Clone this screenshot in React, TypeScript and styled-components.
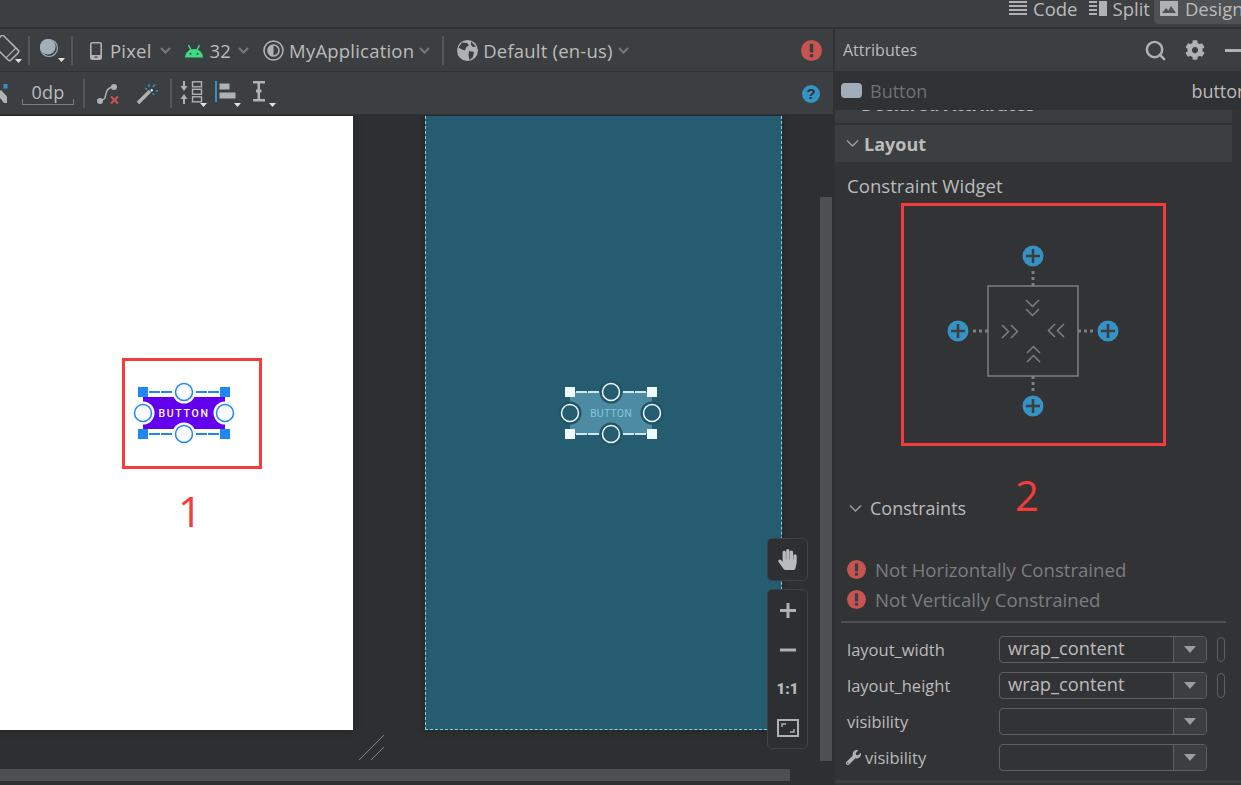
import React from "react";
import styled, { createGlobalStyle } from "styled-components";
import { Search } from "lucide-react";
import { FaCog, FaHandPaper, FaWrench } from "react-icons/fa";

const GlobalStyle = createGlobalStyle`
  html, body {
    margin: 0;
    padding: 0;
    background: #2e2f31;
    overflow: hidden;
  }
  * {
    box-sizing: border-box;
  }
`;

const Root = styled.div`
  width: 1241px;
  height: 785px;
  display: flex;
  flex-direction: column;
  overflow: hidden;
  font-family: "Open Sans", "Noto Sans", sans-serif;
  color: #bbbbbb;
  background: #2e2f31;
`;

const TopBar = styled.div`
  height: 29px;
  flex: none;
  display: flex;
  align-items: flex-start;
  padding-left: 1009px;
  background: #3c3f41;
  border-bottom: 2px solid #2f3133;
  overflow: hidden;
`;

const ViewTab = styled.div<{ $active?: boolean }>`
  height: 24px;
  flex: none;
  display: flex;
  align-items: center;
  gap: ${(p) => (p.$active ? "7px" : "6px")};
  padding: 0 ${(p) => (p.$active ? "6px" : "0")};
  margin-right: ${(p) => (p.$active ? "0" : "11px")};
  margin-left: ${(p) => (p.$active ? "-7px" : "0")};
  border-radius: 0 0 0 4px;
  background: ${(p) => (p.$active ? "#4e5254" : "transparent")};
  font-size: 18.5px;
  line-height: 18px;
  span {
    margin-top: -6px;
  }
  svg {
    margin-top: -6px;
  }
`;

const Main = styled.div`
  flex: 1;
  min-height: 0;
  display: flex;
`;

const Editor = styled.div`
  width: 833px;
  flex: none;
  display: flex;
  flex-direction: column;
`;

const Toolbar = styled.div`
  height: 43px;
  flex: none;
  display: flex;
  align-items: center;
  background: #3c3f41;
  border-bottom: 1px solid #2f3133;
  padding-right: 11px;
`;

const ToolDivider = styled.div<{ $left: number; $right: number }>`
  width: 2px;
  height: 29px;
  flex: none;
  background: #54575a;
  margin-left: ${(p) => p.$left}px;
  margin-right: ${(p) => p.$right}px;
`;

const ToolItem = styled.div<{ $gap: number; $left?: number }>`
  display: flex;
  align-items: center;
  flex: none;
  gap: ${(p) => p.$gap}px;
  margin-left: ${(p) => p.$left ?? 0}px;
  padding-top: 1px;
  font-size: 18.5px;
  letter-spacing: 0.2px;
  line-height: 24px;
  white-space: nowrap;
  svg {
    display: block;
    flex: none;
  }
`;

const EndIcon = styled.div`
  margin-left: auto;
  display: flex;
`;

const DpField = styled.div`
  position: relative;
  width: 52px;
  height: 24px;
  margin-left: 13px;
  flex: none;
  text-align: center;
  font-size: 18px;
  line-height: 22px;
  letter-spacing: 0.3px;
  border-bottom: 1px solid #7b7e80;
  &::before,
  &::after {
    content: "";
    position: absolute;
    bottom: 0;
    width: 1px;
    height: 5px;
    background: #7b7e80;
  }
  &::before {
    left: 0;
  }
  &::after {
    right: 0;
  }
`;

const HelpBadge = styled.span`
  width: 18px;
  height: 18px;
  margin: 1px 2px 0 0;
  border-radius: 50%;
  background: #3592c4;
  color: #2f3133;
  font-family: "Liberation Sans", sans-serif;
  font-size: 15px;
  font-weight: 700;
  line-height: 18px;
  text-align: center;
`;

const Canvas = styled.div`
  position: relative;
  flex: 1;
  min-height: 0;
  display: flex;
  align-items: flex-start;
  gap: 72px;
  padding: 1px 0 0 0;
  overflow: hidden;
  background: #2e2f31;
`;

const Surface = styled.div<{ $blueprint?: boolean }>`
  position: relative;
  flex: none;
  width: 357px;
  height: 614px;
  margin-left: ${(p) => (p.$blueprint ? "0" : "-4px")};
  background: ${(p) => (p.$blueprint ? "#255c70" : "#ffffff")};
  border: ${(p) => (p.$blueprint ? "1px dashed #86d0e6" : "none")};
  border-top: none;
  box-shadow: 0 0 8px rgba(0, 0, 0, 0.25);
`;

const Widget = styled.div<{ $center: number }>`
  position: absolute;
  left: ${(p) => p.$center}px;
  top: 297px;
  width: 110px;
  height: 70px;
  margin: -35px 0 0 -55px;
`;

const WidgetLabel = styled.span<{ $color: string; $weight: number; $spacing: number; $size: number }>`
  position: absolute;
  inset: 0;
  display: flex;
  align-items: center;
  justify-content: center;
  font-family: "Roboto", sans-serif;
  font-size: ${(p) => p.$size}px;
  font-weight: ${(p) => p.$weight};
  letter-spacing: ${(p) => p.$spacing}px;
  color: ${(p) => p.$color};
`;

const RedFrame = styled.div`
  position: absolute;
  left: 126px;
  top: 242px;
  width: 140px;
  height: 111px;
  border: 3px solid #f53b3b;
`;

const RedNumber = styled.span`
  position: absolute;
  left: 182px;
  top: 366px;
  font-family: "Open Sans", sans-serif;
  font-size: 42px;
  line-height: 58px;
  color: #f53b3b;
`;

const ScrollV = styled.div`
  position: absolute;
  left: 820px;
  top: 82px;
  width: 12px;
  height: 564px;
  background: #4d4f51;
`;

const ScrollH = styled.div`
  position: absolute;
  left: 0;
  top: 654px;
  width: 790px;
  height: 12px;
  background: #4d4f51;
`;

const ResizeMark = styled.svg`
  position: absolute;
  left: 358px;
  top: 619px;
`;

const ZoomStack = styled.div`
  position: absolute;
  left: 767px;
  top: 423px;
  width: 41px;
  display: flex;
  flex-direction: column;
  gap: 8px;
`;

const ZoomGroup = styled.div`
  display: flex;
  flex-direction: column;
  align-items: center;
  padding: 1px 0;
  background: #2e2f31;
  border: 1px solid #3f4244;
  border-radius: 5px;
`;

const ZoomButton = styled.div`
  width: 39px;
  height: 39px;
  display: flex;
  align-items: center;
  justify-content: center;
  color: #bbbbbb;
  font-family: "Roboto", sans-serif;
  font-size: 15px;
  font-weight: 900;
`;

const Panel = styled.div`
  flex: 1;
  min-width: 0;
  position: relative;
  display: flex;
  flex-direction: column;
  overflow: hidden;
  border-left: 2px solid #2f3133;
  background: #313335;
`;

const PanelHeader = styled.div`
  height: 42px;
  flex: none;
  display: flex;
  align-items: center;
  padding-left: 8px;
  background: #3c3f41;
  font-size: 16px;
  white-space: nowrap;
`;

const HeaderTools = styled.div`
  margin-left: 227px;
  display: flex;
  align-items: center;
  gap: 18px;
  color: #afb1b3;
`;

const HeaderMinus = styled.span`
  width: 16px;
  height: 3px;
  margin-left: 2px;
  background: #afb1b3;
`;

const SelectedRow = styled.div`
  height: 39px;
  flex: none;
  display: flex;
  align-items: center;
  padding-left: 6px;
  background: #2f3133;
  font-size: 18px;
  white-space: nowrap;
`;

const Swatch = styled.span`
  width: 21px;
  height: 15px;
  flex: none;
  border-radius: 4px;
  background: #a0adb8;
`;

const SelectedName = styled.span`
  width: 58px;
  margin-left: 8px;
  color: #6e7274;
`;

const SelectedId = styled.span`
  margin-left: 264px;
`;

const ClippedSection = styled.div`
  width: 397px;
  height: 15px;
  flex: none;
  overflow: hidden;
  padding-left: 26px;
  background: #3a3d3f;
  border-bottom: 2px solid #2f3133;
  font-size: 17.7px;
  font-weight: 700;
  line-height: 24px;
  white-space: nowrap;
  span {
    display: block;
    margin-top: -18px;
  }
`;

const SectionHeader = styled.div`
  width: 397px;
  height: 37px;
  flex: none;
  display: flex;
  align-items: center;
  gap: 5px;
  padding-left: 11px;
  background: #3c3f41;
  font-size: 18px;
  font-weight: 700;
`;

const WidgetCaption = styled.div`
  margin: 12px 0 0 12px;
  height: 24px;
  font-size: 18.6px;
  line-height: 24px;
`;

const WidgetFrame = styled.div`
  position: relative;
  width: 265px;
  height: 243px;
  flex: none;
  margin: 5px 0 0 66px;
  padding: 35px 2px 0 0;
  display: flex;
  justify-content: center;
  border: 3px solid #f53b3b;
`;

const ConstraintsRow = styled.div`
  display: flex;
  align-items: center;
  gap: 8px;
  margin: 50px 0 0 14px;
  height: 24px;
  font-size: 18px;
  line-height: 24px;
`;

const PanelNumber = styled.span`
  position: absolute;
  left: 180px;
  top: 437px;
  font-size: 42px;
  line-height: 58px;
  color: #f53b3b;
`;

const Warnings = styled.div`
  display: flex;
  flex-direction: column;
  gap: 6px;
  margin: 38px 0 0 12px;
`;

const Warning = styled.div`
  height: 24px;
  display: flex;
  align-items: center;
  gap: 9px;
  font-size: 18.6px;
  line-height: 24px;
  color: #7b7e80;
  svg {
    margin-top: -2px;
  }
`;

const Rule = styled.div`
  height: 2px;
  flex: none;
  margin: 9px 15px 0 6px;
  background: #4d4f51;
`;

const FieldList = styled.div`
  display: flex;
  flex-direction: column;
  gap: 9px;
  margin: 13px 0 0 12px;
`;

const FieldRow = styled.div`
  display: grid;
  grid-template-columns: 142px 208px 10px;
  column-gap: 10px;
  align-items: center;
  height: 27px;
`;

const FieldLabel = styled.div<{ $inset?: number }>`
  display: flex;
  align-items: center;
  gap: 4px;
  margin-left: ${(p) => p.$inset ?? 0}px;
  font-size: 16.5px;
  line-height: 24px;
  svg {
    flex: none;
    color: #afb1b3;
  }
`;

const Combo = styled.div`
  height: 27px;
  display: flex;
  border: 1px solid #5e6060;
  border-radius: 4px;
  background: #313335;
  overflow: hidden;
`;

const ComboValue = styled.div`
  flex: 1;
  padding-left: 8px;
  font-size: 18.3px;
  line-height: 22px;
  color: #bbbbbb;
`;

const ComboArrow = styled.div`
  width: 33px;
  flex: none;
  display: flex;
  align-items: center;
  justify-content: center;
  background: #3c3f41;
  border-left: 1px solid #5e6060;
  &::after {
    content: "";
    border-left: 6px solid transparent;
    border-right: 6px solid transparent;
    border-top: 7px solid #9a9c9e;
  }
`;

const BindPill = styled.div`
  width: 8px;
  height: 25px;
  border: 1px solid #5e6060;
  border-radius: 4px;
`;

const PanelFoot = styled.div`
  position: absolute;
  left: 0;
  right: 0;
  top: 751px;
  height: 3px;
  background: #3c3f41;
`;

const GRAY = "#afb1b3";

const Caret = () => (
  <svg width="11" height="7" viewBox="0 0 11 7" fill="none">
    <path d="M1 1l4.5 4.5L10 1" stroke="#75797b" strokeWidth="2" />
  </svg>
);

const DropMark = ({ x, y }: { x: number; y: number }) => <path d={`M${x} ${y}h7l-3.5 4z`} fill="#dfe1e3" />;

const RotateIcon = () => (
  <svg width="24" height="30" viewBox="0 0 24 30" fill="none">
    <g transform="rotate(-45 6 13)">
      <rect x="-1" y="1" width="14" height="24" rx="2" stroke={GRAY} strokeWidth="1.6" />
      <path d="M-1 20h14" stroke={GRAY} strokeWidth="1.2" />
    </g>
    <DropMark x={15} y={24} />
  </svg>
);

const MoonIcon = () => (
  <svg width="26" height="26" viewBox="0 0 26 26" fill="none">
    <circle cx="10" cy="11" r="8.5" stroke="#a4aeb5" strokeWidth="1.2" />
    <circle cx="8.8" cy="9.8" r="7.8" fill="#a4aeb5" />
    <DropMark x={19} y={21} />
  </svg>
);

const PhoneIcon = () => (
  <svg width="12" height="18" viewBox="0 0 12 18" fill="none">
    <rect x="0.8" y="0.8" width="10.4" height="16.4" rx="1.5" stroke={GRAY} strokeWidth="1.6" />
    <rect x="1" y="13" width="10" height="4" fill={GRAY} />
    <rect x="4.5" y="14.5" width="3" height="1.2" fill="#3c3f41" />
  </svg>
);

const AndroidIcon = () => (
  <svg width="18" height="14" viewBox="0 0 18 14">
    <path d="M0 13.5C0.3 8.5 4 5 9 5s8.7 3.500 9 8.500z" fill="#3ddc84" />
    <path d="M3.500 1l2.500 5M14.500 1l-2.500 5" stroke="#3ddc84" strokeWidth="1.5" />
    <circle cx="5.500" cy="9.800" r="1" fill="#3c3f41" />
    <circle cx="12.500" cy="9.800" r="1" fill="#3c3f41" />
  </svg>
);

const ThemeIcon = () => (
  <svg width="21" height="21" viewBox="0 0 21 21" fill="none">
    <circle cx="10.500" cy="10.500" r="9.500" stroke={GRAY} strokeWidth="1.600" />
    <circle cx="10.500" cy="10.500" r="5.500" stroke={GRAY} strokeWidth="1.600" />
    <path d="M10.500 5a5.500 5.500 0 0 0 0 11z" fill={GRAY} />
  </svg>
);

const GlobeIcon = () => (
  <svg width="21" height="21" viewBox="0 0 21 21">
    <circle cx="10.500" cy="10.500" r="10.500" fill={GRAY} />
    <path d="M5 2.500l5 .5 2 2-3 2.500-1 3-3-1-3.500-2zM12 11l5 1-1 5-3.500 3-1-4zM14 1.500l5 5-3 .5-2-2z" fill="#3c3f41" />
  </svg>
);

const ErrorIcon = ({ size }: { size: number }) => (
  <svg width={size} height={size} viewBox="0 0 20 20">
    <circle cx="10" cy="10" r="10" fill="#c75450" />
    <rect x="8.300" y="3.500" width="3.400" height="8.500" rx="1" fill="#3c3f41" />
    <rect x="8.300" y="13.300" width="3.400" height="3.200" rx="1" fill="#3c3f41" />
  </svg>
);

const PartialIcon = () => (
  <svg width="9" height="20" viewBox="0 0 9 20">
    <rect x="3.500" y="1" width="4" height="4.500" fill="#3592c4" />
    <path d="M-3 11l4-4 6 6.500V20h-3l-4-5z" fill={GRAY} />
  </svg>
);

const ConstraintIcon = () => (
  <svg width="25" height="22" viewBox="0 0 25 22" fill="none">
    <circle cx="4" cy="18" r="3" fill={GRAY} />
    <circle cx="18" cy="4" r="3" fill={GRAY} />
    <path d="M5 17c5 0 4-4 5.500-8C11.500 6 13 4.500 17 4" stroke={GRAY} strokeWidth="1.500" />
    <path d="M15 13.500l7 7M22 13.500l-7 7" stroke="#c75450" strokeWidth="2.200" />
  </svg>
);

const WandIcon = () => (
  <svg width="22" height="22" viewBox="0 0 22 22" fill="none">
    <path d="M2 20L14 8" stroke={GRAY} strokeWidth="3.500" />
    <path d="M15 6.500l1.500 1.500" stroke="#fff" strokeWidth="2" />
    <path d="M13 1v3M20 8h3M9 5l2 1.500M19 1.500L17 4M18.500 12l-2-1.500" stroke="#3592c4" strokeWidth="1.500" />
  </svg>
);

const PackIcon = () => (
  <svg width="28" height="26" viewBox="0 0 28 26" fill="none">
    <path d="M1.500 5h7L5 10z" fill={GRAY} />
    <rect x="4" y="0" width="2" height="6" fill={GRAY} />
    <path d="M1.500 18h7L5 13z" fill={GRAY} />
    <rect x="4" y="18" width="2" height="5" fill={GRAY} />
    <rect x="13.500" y="0.800" width="9" height="5" stroke={GRAY} strokeWidth="1.400" />
    <rect x="13.500" y="8.300" width="9" height="5" stroke={GRAY} strokeWidth="1.400" />
    <rect x="13.500" y="15.800" width="9" height="5" stroke={GRAY} strokeWidth="1.400" />
    <DropMark x={21} y={22} />
  </svg>
);

const AlignIcon = () => (
  <svg width="26" height="26" viewBox="0 0 26 26">
    <rect x="0" y="0" width="2" height="21" fill="#3592c4" />
    <rect x="4.500" y="2.500" width="10" height="6" fill={GRAY} />
    <rect x="4.500" y="11.500" width="16" height="6" fill={GRAY} />
    <DropMark x={19} y={22} />
  </svg>
);

const DistributeIcon = () => (
  <svg width="24" height="26" viewBox="0 0 24 26">
    <rect x="0" y="0" width="12" height="2.500" fill={GRAY} />
    <rect x="0" y="18" width="12" height="2.500" fill={GRAY} />
    <rect x="4.500" y="2" width="2.500" height="16" fill={GRAY} />
    <rect x="3" y="8.500" width="5.500" height="3" fill={GRAY} />
    <DropMark x={16} y={22} />
  </svg>
);

const LinesIcon = () => (
  <svg width="18" height="17" viewBox="0 0 18 17">
    <path d="M0 1h18M0 5h18M0 9h18M0 13h18" stroke={GRAY} strokeWidth="2" />
  </svg>
);

const SplitIcon = () => (
  <svg width="18" height="17" viewBox="0 0 18 17">
    <path d="M0 1h8M0 5h8M0 9h8M0 13h8" stroke={GRAY} strokeWidth="2" />
    <rect x="10" y="0" width="8" height="15" fill={GRAY} />
  </svg>
);

const PictureIcon = () => (
  <svg width="18" height="17" viewBox="0 0 18 17">
    <rect x="0" y="0" width="18" height="15" fill={GRAY} />
    <path d="M2 12l4-5 2.500 2.500L11 5l5 7z" fill="#4e5254" />
  </svg>
);

const FitIcon = () => (
  <svg width="22" height="18" viewBox="0 0 22 18" fill="none">
    <rect x="1" y="1" width="20" height="16" stroke="#afb1b3" strokeWidth="2" />
    <path d="M5 8V5h4M17 10v3h-4" stroke="#afb1b3" strokeWidth="1.400" />
  </svg>
);

const PlusIcon = () => (
  <svg width="16" height="16" viewBox="0 0 16 16">
    <path d="M8 0v15M0 7.500h16" stroke="#afb1b3" strokeWidth="3" />
  </svg>
);

const MinusIcon = () => (
  <svg width="16" height="4" viewBox="0 0 16 4">
    <path d="M0 2h16" stroke="#afb1b3" strokeWidth="3" />
  </svg>
);

const SectionCaret = () => (
  <svg width="13" height="9" viewBox="0 0 13 9" fill="none">
    <path d="M1 1.500l5.500 5.500L12 1.500" stroke="#9a9c9e" strokeWidth="1.500" />
  </svg>
);

interface HandleColors {
  body: string;
  bodyTop: number;
  halo: string;
  ring: string;
  dot: string;
  square: string;
  rail: string;
}

// handle centres sit 41px / 21px from the middle of the widget
const SelectionHandles = ({ body, bodyTop, halo, ring, dot, square, rail }: HandleColors) => {
  const corners = [
    [14, 14],
    [96, 14],
    [14, 56],
    [96, 56],
  ];
  const anchors = [
    [55, 14],
    [55, 56],
    [14, 35],
    [96, 35],
  ];
  return (
    <svg width="110" height="70" viewBox="0 0 110 70">
      <rect x="14" y={bodyTop} width="82" height={70 - bodyTop * 2} fill={body} />
      {anchors.map(([cx, cy]) => (
        <circle key={`h${cx}${cy}`} cx={cx} cy={cy} r="11.500" fill={halo} />
      ))}
      <path d="M20 14h23M67 14h23M20 56h23M67 56h23" stroke={rail} strokeWidth="2" strokeDasharray="11 1" />
      {anchors.map(([cx, cy]) => (
        <circle key={`a${cx}${cy}`} cx={cx} cy={cy} r="8.500" fill={dot} stroke={ring} strokeWidth="1.500" />
      ))}
      {corners.map(([cx, cy]) => (
        <rect key={`c${cx}${cy}`} x={cx - 5} y={cy - 5} width="10" height="10" fill={square} />
      ))}
    </svg>
  );
};

const ConstraintDiagram = () => {
  const sides = [0, 90, 180, 270];
  return (
    <svg width="180" height="180" viewBox="-90 -90 180 180" fill="none">
      <rect x="-45" y="-45" width="90" height="90" stroke="#7d7f80" strokeWidth="1.500" />
      {sides.map((angle) => (
        <g key={angle} transform={`rotate(${angle})`}>
          <path d="M0 -60V-45" stroke="#7d7f80" strokeWidth="3" strokeDasharray="3 3" />
          <circle cx="0" cy="-75" r="10.500" fill="#3592c4" />
          <path d="M-7 -75h14M0 -82v14" stroke="#3c3f41" strokeWidth="2.600" />
          <path d="M-7 -31l6.500 6.500 6.500-6.500M-7 -22l6.500 6.500 6.500-6.500" stroke="#7d7f80" strokeWidth="1.500" />
        </g>
      ))}
    </svg>
  );
};

const Field = ({ label, value, bound, tool }: { label: string; value?: string; bound?: boolean; tool?: boolean }) => (
  <FieldRow>
    <FieldLabel $inset={tool ? -1 : 0}>
      {tool && <FaWrench size={15} />}
      {label}
    </FieldLabel>
    <Combo>
      <ComboValue>{value}</ComboValue>
      <ComboArrow />
    </Combo>
    {bound && <BindPill />}
  </FieldRow>
);

export default function App() {
  return (
    <Root>
      <GlobalStyle />
      <TopBar>
        <ViewTab>
          <LinesIcon />
          <span>Code</span>
        </ViewTab>
        <ViewTab>
          <SplitIcon />
          <span>Split</span>
        </ViewTab>
        <ViewTab $active>
          <PictureIcon />
          <span>Design</span>
        </ViewTab>
      </TopBar>
      <Main>
        <Editor>
          <Toolbar>
            <RotateIcon />
            <ToolDivider $left={4} $right={9} />
            <MoonIcon />
            <ToolDivider $left={6} $right={0} />
            <ToolItem $gap={8} $left={17}>
              <PhoneIcon />
              Pixel
              <Caret />
            </ToolItem>
            <ToolItem $gap={7} $left={14}>
              <AndroidIcon />
              32
              <Caret />
            </ToolItem>
            <ToolItem $gap={5} $left={14}>
              <ThemeIcon />
              MyApplication
              <Caret />
            </ToolItem>
            <ToolDivider $left={12} $right={0} />
            <ToolItem $gap={5} $left={13}>
              <GlobeIcon />
              Default (en-us)
              <Caret />
            </ToolItem>
            <EndIcon>
              <ErrorIcon size={21} />
            </EndIcon>
          </Toolbar>
          <Toolbar>
            <PartialIcon />
            <DpField>0dp</DpField>
            <ToolDivider $left={9} $right={0} />
            <ToolItem $gap={0} $left={11}>
              <ConstraintIcon />
            </ToolItem>
            <ToolItem $gap={0} $left={15}>
              <WandIcon />
            </ToolItem>
            <ToolDivider $left={12} $right={0} />
            <ToolItem $gap={0} $left={7}>
              <PackIcon />
            </ToolItem>
            <ToolItem $gap={0} $left={8}>
              <AlignIcon />
            </ToolItem>
            <ToolItem $gap={0} $left={12}>
              <DistributeIcon />
            </ToolItem>
            <EndIcon>
              <HelpBadge>?</HelpBadge>
            </EndIcon>
          </Toolbar>
          <Canvas>
            <Surface>
              <Widget $center={188}>
                <SelectionHandles
                  body="#6200ee"
                  bodyTop={19}
                  halo="#fafafa"
                  ring="#1e88f0"
                  dot="#fafafa"
                  square="#1e88f0"
                  rail="#1e88f0"
                />
                <WidgetLabel $color="#ffffff" $weight={500} $spacing={1.7} $size={10.5}>
                  BUTTON
                </WidgetLabel>
              </Widget>
              <RedFrame />
              <RedNumber>1</RedNumber>
            </Surface>
            <Surface $blueprint>
              <Widget $center={185}>
                <SelectionHandles
                  body="#4c8ba2"
                  bodyTop={14}
                  halo="#215466"
                  ring="#f2fbff"
                  dot="#255c70"
                  square="#effaff"
                  rail="#cfe9f2"
                />
                <WidgetLabel $color="#85c6da" $weight={400} $spacing={0.2} $size={10.5}>
                  BUTTON
                </WidgetLabel>
              </Widget>
            </Surface>
            <ScrollV />
            <ScrollH />
            <ResizeMark width="27" height="27" viewBox="0 0 27 27" fill="none">
              <path d="M1 26L26 1M13 26L26 13" stroke="#85878a" strokeWidth="1" />
            </ResizeMark>
            <ZoomStack>
              <ZoomGroup>
                <ZoomButton>
                  <FaHandPaper size={21} />
                </ZoomButton>
              </ZoomGroup>
              <ZoomGroup>
                <ZoomButton>
                  <PlusIcon />
                </ZoomButton>
                <ZoomButton>
                  <MinusIcon />
                </ZoomButton>
                <ZoomButton>1:1</ZoomButton>
                <ZoomButton>
                  <FitIcon />
                </ZoomButton>
              </ZoomGroup>
            </ZoomStack>
          </Canvas>
        </Editor>
        <Panel>
          <PanelHeader>
            Attributes
            <HeaderTools>
              <Search size={23} strokeWidth={2.6} />
              <FaCog size={20} />
              <HeaderMinus />
            </HeaderTools>
          </PanelHeader>
          <SelectedRow>
            <Swatch />
            <SelectedName>Button</SelectedName>
            <SelectedId>button</SelectedId>
          </SelectedRow>
          <ClippedSection>
            <span>Declared Attributes</span>
          </ClippedSection>
          <SectionHeader>
            <SectionCaret />
            Layout
          </SectionHeader>
          <WidgetCaption>Constraint Widget</WidgetCaption>
          <WidgetFrame>
            <ConstraintDiagram />
          </WidgetFrame>
          <ConstraintsRow>
            <SectionCaret />
            Constraints
          </ConstraintsRow>
          <PanelNumber>2</PanelNumber>
          <Warnings>
            <Warning>
              <ErrorIcon size={19} />
              Not Horizontally Constrained
            </Warning>
            <Warning>
              <ErrorIcon size={19} />
              Not Vertically Constrained
            </Warning>
          </Warnings>
          <Rule />
          <FieldList>
            <Field label="layout_width" value="wrap_content" bound />
            <Field label="layout_height" value="wrap_content" bound />
            <Field label="visibility" />
            <Field label="visibility" tool />
          </FieldList>
          <PanelFoot />
        </Panel>
      </Main>
    </Root>
  );
}
